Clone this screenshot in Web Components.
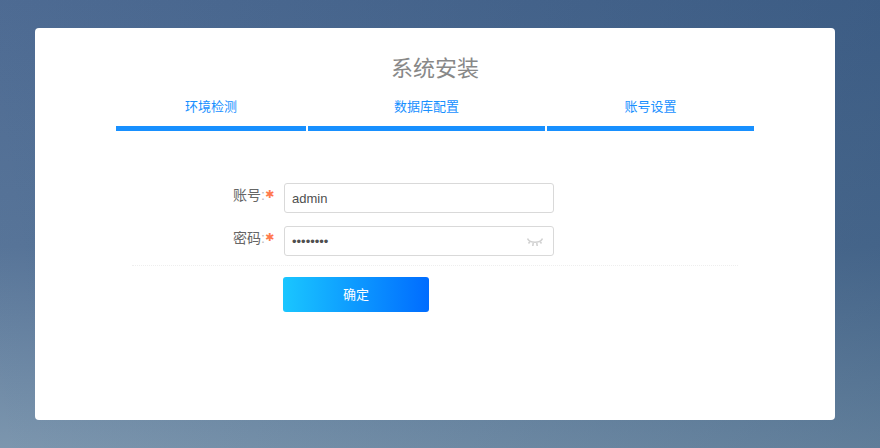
<!DOCTYPE html>
<html>
<head>
<meta charset="utf-8">
<title>系统安装</title>
<style>
    html, body { margin: 0; height: 100%; }
    body {
        height: 448px;
        overflow: hidden;
        font-family: "Liberation Sans", "Noto Sans CJK SC", sans-serif;
        background:
            linear-gradient(80deg, rgba(10, 50, 90, 0) 0%, rgba(10, 50, 90, 0.27) 100%),
            linear-gradient(180deg, #4f6c94 0%, #587599 55%, #7c96ae 100%);
    }
</style>
</head>
<body>
<install-page></install-page>

<template id="install-page-tpl">
    <style>
        :host { display: block; padding: 28px 45px 28px 35px; }
        .card {
            height: 392px;
            box-sizing: border-box;
            background: #fff;
            border-radius: 4px;
            padding-top: 26px;
        }
        h1 {
            margin: 0;
            height: 30px;
            font-size: 22px;
            line-height: 30px;
            font-weight: 400;
            color: #888;
            text-align: center;
        }
    </style>
    <div class="card">
        <h1>系统安装</h1>
        <install-steps></install-steps>
        <install-form></install-form>
    </div>
</template>

<template id="install-steps-tpl">
    <style>
        :host {
            display: grid;
            grid-template-columns: 190px 237px 207px;
            column-gap: 2px;
            margin: 11px 0 0 81px;
            width: 638px;
        }
        .step {
            height: 36px;
            box-sizing: border-box;
            border-bottom: 5px solid #1890ff;
            color: #1890ff;
            font-size: 13px;
            line-height: 24px;
            text-align: center;
        }
    </style>
    <div class="step">环境检测</div>
    <div class="step">数据库配置</div>
    <div class="step">账号设置</div>
</template>

<template id="form-row-tpl">
    <style>
        :host {
            display: flex;
            align-items: center;
            height: 30px;
        }
        label {
            width: 239px;
            box-sizing: border-box;
            padding-bottom: 7px;
            display: flex;
            justify-content: flex-end;
            align-items: center;
            font-size: 14px;
            line-height: 20px;
            color: #666;
            white-space: nowrap;
        }
        .colon { color: #bbb; width: 4px; text-align: center; }
        .req {
            width: 9px;
            color: #ff7a4d;
            font-size: 11px;
            text-align: center;
            font-family: "DejaVu Sans", sans-serif;
        }
        .box {
            margin-left: 10px;
            width: 270px;
            height: 30px;
            box-sizing: border-box;
            border: 1px solid #d9d9d9;
            border-radius: 3px;
            padding: 0 10px 0 7px;
            display: flex;
            align-items: center;
            justify-content: space-between;
            font-size: 13px;
            color: #4f4f4f;
            background: #fff;
        }
        ::slotted(svg) { display: block; margin-top: 3px; }
    </style>
    <label><span id="name"></span><span class="colon">:</span><span class="req">✱</span></label>
    <div class="box"><span id="value"></span><slot></slot></div>
</template>

<template id="install-form-tpl">
    <style>
        :host { display: block; padding-top: 52px; }
        .rows { display: flex; flex-direction: column; gap: 13px; }
        hr {
            margin: 9px 97px 0 97px;
            border: 0;
            border-top: 1px dotted #eee;
            height: 0;
        }
        button {
            display: block;
            margin: 11px 0 0 248px;
            width: 146px;
            height: 35px;
            padding: 0 0 2px;
            border: 0;
            border-radius: 3px;
            background: linear-gradient(90deg, #1ac6ff, #006cff);
            color: #fff;
            font: 13px "Liberation Sans", "Noto Sans CJK SC", sans-serif;
        }
    </style>
    <div class="rows">
        <form-row name="账号" value="admin"></form-row>
        <form-row name="密码" value="••••••••">
            <svg width="16" height="10" viewBox="0 0 16 10" fill="none" stroke="#d2d2d2" stroke-width="1.6">
                <path d="M0.5 0.500C3 5.500 13 5.500 15.500 0.500"/>
                <path d="M3 3.500 1.500 5.500M6.200 5 5.800 8M9.800 5 10.200 8M13 3.500 14.500 5.500"/>
            </svg>
        </form-row>
    </div>
    <hr>
    <button type="button">确定</button>
</template>

<script>
    function mount(el, id) {
        el.attachShadow({ mode: 'open' });
        el.shadowRoot.appendChild(document.getElementById(id).content.cloneNode(true));
    }

    class InstallPage extends HTMLElement {
        connectedCallback() { mount(this, 'install-page-tpl'); }
    }

    class InstallSteps extends HTMLElement {
        connectedCallback() { mount(this, 'install-steps-tpl'); }
    }

    class InstallForm extends HTMLElement {
        connectedCallback() { mount(this, 'install-form-tpl'); }
    }

    class FormRow extends HTMLElement {
        connectedCallback() {
            mount(this, 'form-row-tpl');
            this.shadowRoot.getElementById('name').textContent = this.getAttribute('name');
            this.shadowRoot.getElementById('value').textContent = this.getAttribute('value');
        }
    }

    customElements.define('form-row', FormRow);
    customElements.define('install-form', InstallForm);
    customElements.define('install-steps', InstallSteps);
    customElements.define('install-page', InstallPage);
</script>
</body>
</html>
